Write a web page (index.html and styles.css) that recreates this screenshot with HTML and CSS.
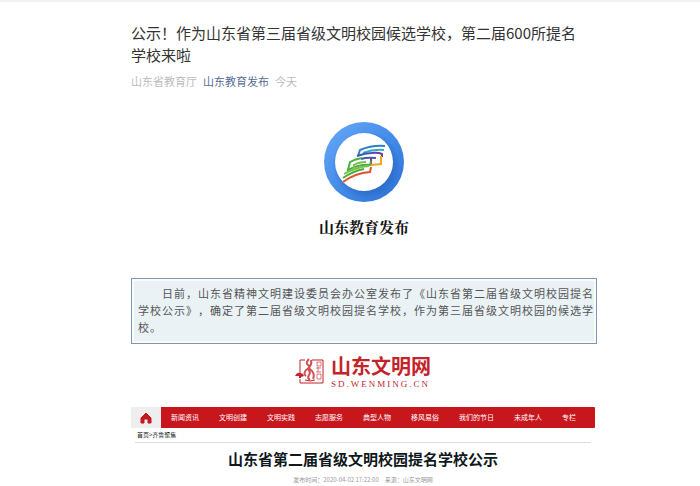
FILE: index.html
```html
<!doctype html>
<html lang="zh-CN">
<head>
<meta charset="UTF-8">
<title>公示！作为山东省第三届省级文明校园候选学校</title>
<link rel="stylesheet" href="styles.css">
</head>
<body>
<article class="article">
<h1 class="title">公示！作为山东省第三届省级文明校园候选学校，第二届600所提名<br>学校来啦</h1>
<p class="meta"><span>山东省教育厅</span><a href="#">山东教育发布</a><span>今天</span></p>

<div class="brand">
<svg class="brand-mark" viewBox="0 0 80 80" width="80" height="80" aria-hidden="true">
	<defs>
		<linearGradient id="ring" x1="0" y1="0" x2="1" y2="1">
			<stop offset="0" stop-color="#68a9f8"/>
			<stop offset=".55" stop-color="#418ae8"/>
			<stop offset="1" stop-color="#2b6fd3"/>
		</linearGradient>
		<radialGradient id="shade" cx="42" cy="43" r="34" gradientUnits="userSpaceOnUse">
			<stop offset=".75" stop-color="#1c4fa8" stop-opacity=".4"/>
			<stop offset="1" stop-color="#1c4fa8" stop-opacity="0"/>
		</radialGradient>
	</defs>
	<circle cx="40" cy="40" r="40" fill="url(#ring)"/>
	<circle cx="42" cy="43" r="34" fill="url(#shade)"/>
	<circle cx="40" cy="40" r="29" fill="#fff"/>
	<g fill="none" stroke-width="2">
		<path d="M61 24q-13-1-25 4l-2 6" stroke="#2f7fc6"/>
		<path d="M60 28q-11-1-21 3" stroke="#35a7cf"/>
		<path d="M33 34q8-3 15-3" stroke="#3f56b0"/>
		<path d="M48 31q6-1 10 1v3" stroke="#6a3fa0"/>
		<path d="M37 37q6-2 15-1" stroke="#4a55b0"/>
		<path d="M47 36v6" stroke="#7b3aa0"/>
		<path d="M57 34v8l-10 1" stroke="#f4a51f"/>
		<path d="M38 36q-7 1-12 4l-2 8q12-6 22-5l1-4" stroke="#4caf45"/>
		<path d="M42 40q-7 0-12 3v3" stroke="#79bf43"/>
		<path d="M20 52q12-7 25-8" stroke="#79bf43"/>
		<path d="M19 56q10-7 21-9" stroke="#4caf45"/>
		<path d="M19 60q12-9 27-10l1-5" stroke="#e3502d"/>
	</g>
</svg>
<div class="brand-name">山东教育发布</div>
</div>

<p class="notice">日前，山东省精神文明建设委员会办公室发布了《山东省第二届省级文明校园提名学校公示》，确定了第二届省级文明校园提名学校，作为第三届省级文明校园的候选学校。</p>

<section class="site">
<div class="site-logo">
	<svg viewBox="0 0 30 30" width="30" height="30" aria-hidden="true">
		<g fill="none" stroke="#c4232a">
			<path d="M5 17V4h5M17 4h11v23H5v-4"/>
			<path d="M14 3q-4 4-1 6t-2 5q-3 4 0 6M16 4q1 4-1 6t2 5q3 4 1 8M13 13q3 3 1 6t1 5" stroke-width="2" stroke-opacity=".8"/>
			<path d="M22 6h4v4h-4zM21 12h5M23 11v5M21 16h5M22 18h4v5h-4z" stroke-opacity=".6"/>
			<path d="M10 24q5 2 10 0"/>
		</g>
		<path d="M0 20q2-4 5-3 3 0 4 3l-3 1v1H4v-2z" fill="#c4232a"/>
	</svg>
	<div>
		<div class="site-name">山东文明网</div>
		<div class="site-domain">SD.WENMING.CN</div>
	</div>
</div>
<nav class="nav">
	<a class="home" href="#" aria-label="首页"><svg viewBox="0 0 12 12" width="12" height="12" aria-hidden="true"><path d="M6 1l5 5v5H8V7H4v4H1V6z" fill="#c8161d" stroke="#c8161d" stroke-linejoin="round"/></svg></a>
	<a href="#">新闻资讯</a>
	<a href="#">文明创建</a>
	<a href="#">文明实践</a>
	<a href="#">志愿服务</a>
	<a href="#">典型人物</a>
	<a href="#">移风易俗</a>
	<a href="#">我们的节日</a>
	<a href="#">未成年人</a>
	<a href="#">专栏</a>
</nav>
<div class="crumbs"><a href="#">首页</a>&gt;<a href="#">齐鲁聚焦</a></div>
<h2 class="headline">山东省第二届省级文明校园提名学校公示</h2>
<p class="source"><span>发布时间：2020-04-02 17:22:00</span><span>来源：山东文明网</span></p>
</section>
</article>
</body>
</html>
```

FILE: styles.css
```css
body{margin:0;border-top:2px solid #f2f2f2;background:#fff;color:#333;font-family:"Noto Sans CJK SC",sans-serif;text-spacing-trim:space-all;}
a{color:inherit;text-decoration:none;}
svg{display:block;}

.article{padding:20px 103px 0 131px;}
.title{margin:0;font-size:15px;font-weight:400;line-height:22px;}
.meta{display:flex;gap:6px;margin:6px 0 0;font-size:11px;line-height:18px;color:#bbb;}
.meta a{color:#576b95;}

.brand{display:flex;flex-direction:column;align-items:center;margin-top:32px;color:#111;}
.brand-name{margin-top:14px;font:bold 15px/24px "Liberation Serif","Noto Serif CJK SC","Noto Sans CJK SC",serif;}

.notice{margin:38px 0 0;padding:6px 1px 7px 6px;border:1px solid #8196b4;box-shadow:inset 0 0 0 2px #f8fbfc;background:#eaf2f6;font-size:11px;line-height:17px;letter-spacing:1px;text-indent:24px;color:#555;}

/* news site */
.site{margin:12px 2px 0 0;}
.site-logo{display:flex;justify-content:center;gap:6px;color:#c4232a;}
.site-name{font-size:20px;font-weight:700;line-height:20px;}
.site-domain{font:9px/14px "Liberation Serif",serif;letter-spacing:2px;margin-top:1px;}
.nav{display:flex;margin-top:16px;border-radius:0 1px 1px 0;background:#c8161d;color:#fff;font-size:7px;line-height:21px;}
.nav a{padding:0 10px;white-space:nowrap;}
.nav .home{display:flex;align-items:center;padding:0 9px;background:#eee;}
.crumbs{margin:0 4px;padding:2px;border-bottom:1px solid #ddd;font-size:6px;line-height:10px;color:#222;}
.headline{margin:5px 0 0;font-size:15px;font-weight:700;line-height:22px;text-align:center;color:#101820;}
.source{display:flex;justify-content:center;gap:6px;margin:5px 0 0;font-size:6px;line-height:10px;color:#999;}
```
